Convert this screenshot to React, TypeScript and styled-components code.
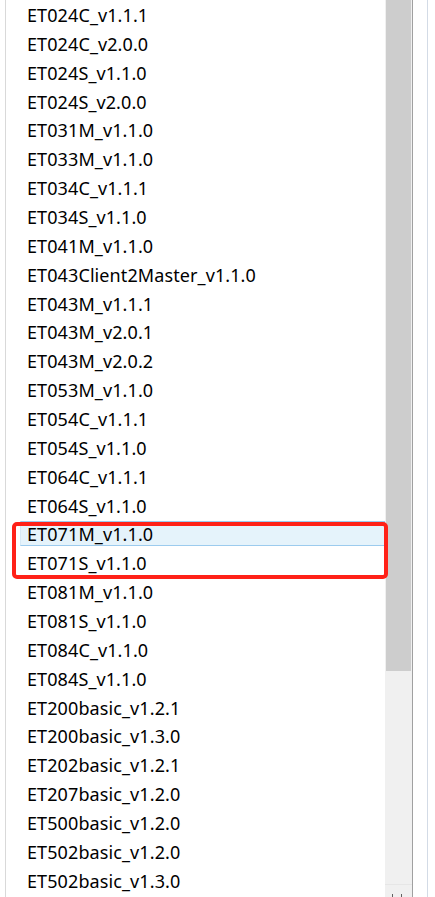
import React from 'react';
import styled, { createGlobalStyle } from 'styled-components';

const GlobalStyle = createGlobalStyle`
  html, body {
    margin: 0;
    padding: 0;
    background: #ffffff;
    overflow: hidden;
  }
  body {
    font-family: "Noto Sans", "Liberation Sans", sans-serif;
  }
`;

const Window = styled.div`
  position: relative;
  display: flex;
  width: 435px;
  height: 897px;
  overflow: hidden;
  background: #ffffff;
`;

const ListBox = styled.div`
  display: flex;
  width: 406px;
  height: 100%;
  margin-left: 5px;
  border-left: 1px solid #d9d9d9;
  border-right: 1px solid #a0a0a0;
`;

const Items = styled.div`
  flex: 1;
  padding: 2px 0 0 14px;
  overflow: hidden;
`;

const Row = styled.div<{ $selected?: boolean }>`
  height: 25px;
  margin-bottom: 3.87px;
  padding-left: 6px;
  line-height: 24px;
  font-size: 18px;
  letter-spacing: 0.1px;
  color: #000000;
  white-space: nowrap;
  box-sizing: border-box;
  background: ${(p) => (p.$selected ? '#e5f3fb' : 'transparent')};
  border: 1px solid ${(p) => (p.$selected ? '#9ccbee' : 'transparent')};
  border-left-color: ${(p) => (p.$selected ? '#d6e9f6' : 'transparent')};
`;

const ScrollBar = styled.div`
  display: flex;
  flex-direction: column;
  width: 27px;
  height: 100%;
  background: #f0f0f0;
`;

const Thumb = styled.div`
  height: 671px;
  margin: 0 1px;
  background: #cdcdcd;
`;

const Track = styled.div`
  flex: 1;
  border-bottom: 1px solid #e6e6e6;
  margin-bottom: 12px;
`;

const ArrowDown = styled.div`
  position: absolute;
  left: 392px;
  bottom: -3px;
  width: 8px;
  height: 6px;
  border-left: 1px solid #606060;
  border-right: 1px solid #606060;
`;

const Side = styled.div`
  width: 14px;
  height: 100%;
  border-right: 1px solid #d3dbe6;
`;

const Highlight = styled.div`
  position: absolute;
  left: 12px;
  top: 522px;
  width: 376px;
  height: 57px;
  border: 4px solid #ff2118;
  border-radius: 5px;
  box-sizing: border-box;
  pointer-events: none;
`;

const items = [
  'ET024C_v1.1.1',
  'ET024C_v2.0.0',
  'ET024S_v1.1.0',
  'ET024S_v2.0.0',
  'ET031M_v1.1.0',
  'ET033M_v1.1.0',
  'ET034C_v1.1.1',
  'ET034S_v1.1.0',
  'ET041M_v1.1.0',
  'ET043Client2Master_v1.1.0',
  'ET043M_v1.1.1',
  'ET043M_v2.0.1',
  'ET043M_v2.0.2',
  'ET053M_v1.1.0',
  'ET054C_v1.1.1',
  'ET054S_v1.1.0',
  'ET064C_v1.1.1',
  'ET064S_v1.1.0',
  'ET071M_v1.1.0',
  'ET071S_v1.1.0',
  'ET081M_v1.1.0',
  'ET081S_v1.1.0',
  'ET084C_v1.1.0',
  'ET084S_v1.1.0',
  'ET200basic_v1.2.1',
  'ET200basic_v1.3.0',
  'ET202basic_v1.2.1',
  'ET207basic_v1.2.0',
  'ET500basic_v1.2.0',
  'ET502basic_v1.2.0',
  'ET502basic_v1.3.0',
];

export default function App() {
  return (
    <Window>
      <GlobalStyle />
      <ListBox>
        <Items>
          {items.map((name) => (
            <Row key={name} $selected={name === 'ET071M_v1.1.0'}>
              {name}
            </Row>
          ))}
        </Items>
        <ScrollBar>
          <Thumb />
          <Track />
        </ScrollBar>
      </ListBox>
      <Side />
      <ArrowDown />
      <Highlight />
    </Window>
  );
}
